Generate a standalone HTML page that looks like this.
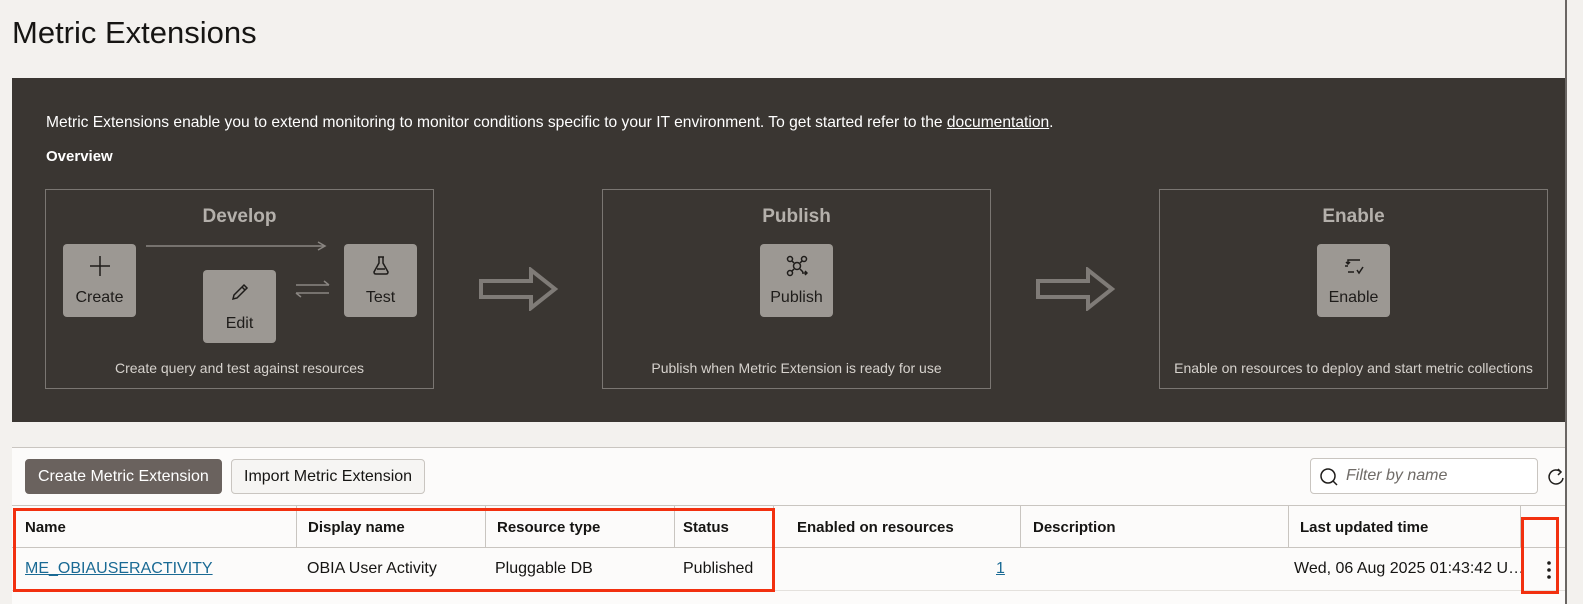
<!DOCTYPE html>
<html><head><style>
*{box-sizing:border-box;margin:0;padding:0}
body{width:1583px;height:604px;overflow:hidden;background:#f3f1ee;font-family:"Liberation Sans",Arial,sans-serif;position:relative;color:#161513}
.abs{position:absolute}
h1{position:absolute;left:12px;top:15px;font-size:31px;font-weight:normal;color:#161513}
.panel{position:absolute;left:12px;top:78px;width:1553px;height:344px;background:#3a3632}
.intro{position:absolute;left:34px;top:36px;font-size:15.6px;color:#fff}
.intro u{text-decoration:underline}
.ov{position:absolute;left:34px;top:70px;font-size:15px;font-weight:bold;color:#fff}
.box{position:absolute;top:111px;width:389px;height:200px;border:1px solid #7a7672}
.box .t{position:absolute;top:16px;width:100%;text-align:center;font-size:19px;font-weight:bold;color:#b4b0ab}
.box .c{position:absolute;bottom:12px;width:100%;text-align:center;font-size:14px;color:#d6d2cd}
.tile{position:absolute;width:73px;height:73px;background:#9c9893;border-radius:4px;text-align:center;font-size:16px;color:#1e1c1a}
.tile svg{position:absolute;left:26px;top:11px}
.tile span{position:absolute;left:0;right:0;top:45px}
.card{position:absolute;left:12px;top:447px;width:1553px;height:157px;background:#fcfbfa;border-top:1px solid #c9c5c0}
.btn{position:absolute;top:11px;height:35px;border-radius:4px;font-size:16px;line-height:33px;padding:0 12px}
.hdr{position:absolute;top:57px;left:0;width:1553px;height:43px;border-top:1px solid #c9c5c0;border-bottom:1px solid #c9c5c0}
.row{position:absolute;top:100px;left:0;width:1553px;height:43px;border-bottom:1px solid #e4e1dd}
.h{position:absolute;top:13px;font-size:15px;font-weight:bold}
.d{position:absolute;top:12px;font-size:16px}
.sep{position:absolute;top:0;width:1px;height:42px;background:#c9c5c0}
.red{position:absolute;border:3px solid #f2300f}
</style></head><body>
<h1>Metric Extensions</h1>
<div class="panel">
<div class="intro">Metric Extensions enable you to extend monitoring to monitor conditions specific to your IT environment. To get started refer to the <u>documentation</u>.</div>
<div class="ov">Overview</div>
<div class="box" style="left:33px"><div class="t">Develop</div><div class="c">Create query and test against resources</div>
 <svg class="abs" style="left:100px;top:50px" width="182" height="12"><line x1="0" y1="6" x2="178" y2="6" stroke="#8a8682" stroke-width="1.5"/><path d="M172 2 L179 6 L172 10" fill="none" stroke="#8a8682" stroke-width="1.5"/></svg>
 <svg class="abs" style="left:248px;top:90px" width="38" height="18"><path d="M2 5 H35 M30 1 L35 5 M2 13 H35 M2 13 L7 17" fill="none" stroke="#8a8682" stroke-width="1.5"/></svg>
 <div class="tile" style="left:17px;top:54px"><svg width="22" height="22"><path d="M11 1V21M1 11H21" stroke="#1e1c1a" stroke-width="1.5"/></svg><span>Create</span></div>
 <div class="tile" style="left:157px;top:80px"><svg width="22" height="22"><path d="M4 18 L5 14 L15 4 L18 7 L8 17 Z M13 6 L16 9" fill="none" stroke="#1e1c1a" stroke-width="1.5"/></svg><span>Edit</span></div>
 <div class="tile" style="left:298px;top:54px"><svg width="22" height="22"><path d="M8 2H14M9 2V8L4 17Q4 19 6 19H16Q18 19 18 17L13 8V2M7 14H15" fill="none" stroke="#1e1c1a" stroke-width="1.5"/></svg><span>Test</span></div>
</div>
<svg class="abs" style="left:467px;top:189px" width="80" height="44"><path d="M2 14 H52 V3 L76 22 L52 41 V30 H2 Z" fill="none" stroke="#7f7b77" stroke-width="4"/></svg>
<div class="box" style="left:590px"><div class="t">Publish</div><div class="c">Publish when Metric Extension is ready for use</div>
 <div class="tile" style="left:157px;top:54px"><svg width="22" height="22"><circle cx="4" cy="4" r="2.5" fill="none" stroke="#1e1c1a" stroke-width="1.5"/><circle cx="18" cy="4" r="2.5" fill="none" stroke="#1e1c1a" stroke-width="1.5"/><circle cx="4" cy="18" r="2.5" fill="none" stroke="#1e1c1a" stroke-width="1.5"/><circle cx="11" cy="11" r="3.5" fill="none" stroke="#1e1c1a" stroke-width="1.5"/><path d="M6 6L8 8M16 6L14 8M6 16L8 14M14 14L17 17M16 18H21M19 16L21 18L19 20" fill="none" stroke="#1e1c1a" stroke-width="1.5"/></svg><span>Publish</span></div>
</div>
<svg class="abs" style="left:1024px;top:189px" width="80" height="44"><path d="M2 14 H52 V3 L76 22 L52 41 V30 H2 Z" fill="none" stroke="#7f7b77" stroke-width="4"/></svg>
<div class="box" style="left:1147px"><div class="t">Enable</div><div class="c">Enable on resources to deploy and start metric collections</div>
 <div class="tile" style="left:157px;top:54px"><svg width="22" height="22"><path d="M17 5H5V9M3 7L5 9L7 7M5 17H11M14 15L16 18L20 12M2 11H5" fill="none" stroke="#1e1c1a" stroke-width="1.5"/></svg><span>Enable</span></div>
</div>
</div>
<div class="card">
<div class="btn" style="left:13px;background:#6a625e;color:#fff;border:1px solid #6a625e">Create Metric Extension</div>
<div class="btn" style="left:219px;background:#f6f5f3;border:1px solid #c9c5c0">Import Metric Extension</div>
<div class="abs" style="left:1298px;top:10px;width:228px;height:36px;border:1px solid #c9c5c0;border-radius:4px;background:#fff">
<svg class="abs" style="left:8px;top:8px" width="20" height="20"><circle cx="9" cy="9" r="7" fill="none" stroke="#1e1c1a" stroke-width="1.5"/><path d="M14 14L18 18" stroke="#1e1c1a" stroke-width="1.5"/></svg>
<span class="abs" style="left:35px;top:8px;font-size:16px;font-style:italic;color:#6f6b67">Filter by name</span></div>
<svg class="abs" style="left:1536px;top:18px" width="17" height="22"><path d="M13 6 A7 7 0 1 0 15 12" fill="none" stroke="#1e1c1a" stroke-width="1.5"/><path d="M10 3L13 6L10 9" fill="none" stroke="#1e1c1a" stroke-width="1.5"/></svg>
<div class="hdr">
<div class="h" style="left:13px">Name</div><div class="sep" style="left:284px"></div>
<div class="h" style="left:296px">Display name</div><div class="sep" style="left:473px"></div>
<div class="h" style="left:485px">Resource type</div><div class="sep" style="left:662px"></div>
<div class="h" style="left:671px">Status</div><div class="sep" style="left:761px"></div>
<div class="h" style="left:785px">Enabled on resources</div><div class="sep" style="left:1008px"></div>
<div class="h" style="left:1021px">Description</div><div class="sep" style="left:1276px"></div>
<div class="h" style="left:1288px">Last updated time</div><div class="sep" style="left:1508px"></div>
</div>
<div class="row">
<div class="d" style="left:13px;color:#1a6a94;text-decoration:underline">ME_OBIAUSERACTIVITY</div>
<div class="d" style="left:295px">OBIA User Activity</div>
<div class="d" style="left:483px">Pluggable DB</div>
<div class="d" style="left:671px">Published</div>
<div class="d" style="left:984px;color:#1a6a94;text-decoration:underline">1</div>
<div class="d" style="left:1282px">Wed, 06 Aug 2025 01:43:42 U…</div>
<svg class="abs" style="left:1534px;top:12px" width="6" height="20"><circle cx="3" cy="3" r="1.8" fill="#1e1c1a"/><circle cx="3" cy="10" r="1.8" fill="#1e1c1a"/><circle cx="3" cy="17" r="1.8" fill="#1e1c1a"/></svg>
</div>
</div>
<div class="red" style="left:13px;top:508px;width:762px;height:84px"></div>
<div class="red" style="left:1521px;top:517px;width:38px;height:77px"></div>
<div class="abs" style="left:1565px;top:0;width:2px;height:604px;background:#6a6663"></div>
</body></html>
